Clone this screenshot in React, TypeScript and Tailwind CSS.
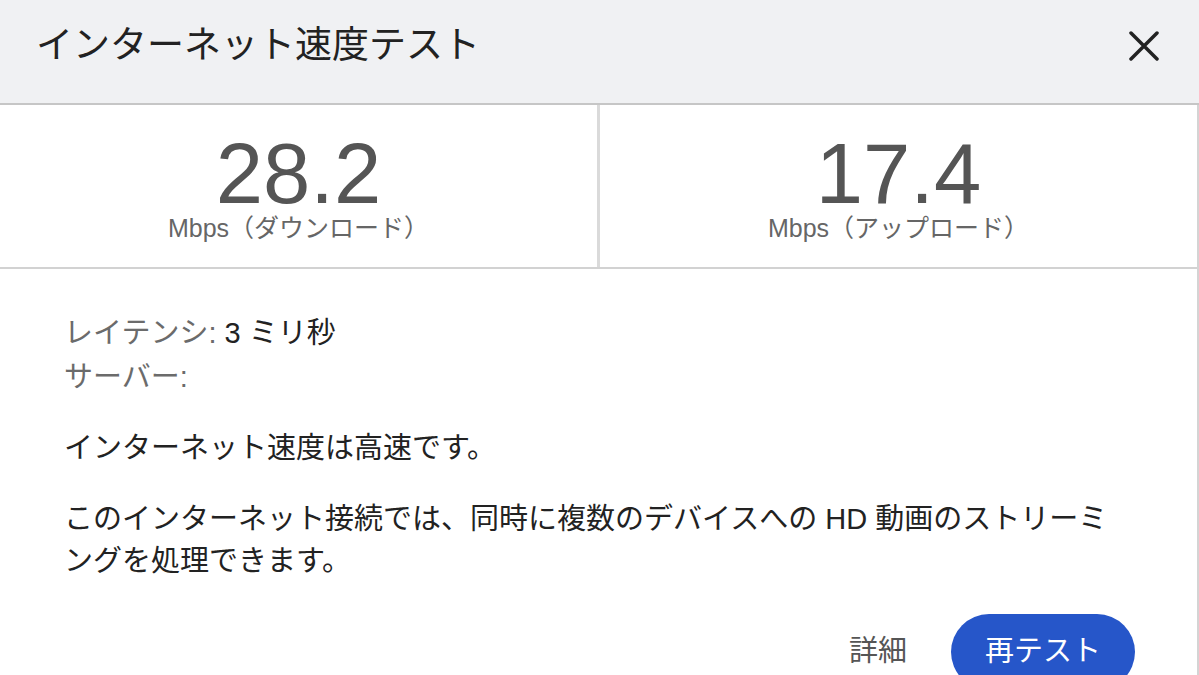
import React from 'react';

const font = { fontFamily: '"Liberation Sans", "Noto Sans CJK JP", sans-serif' };

const Stat: React.FC<{ value: string; label: string; divider?: boolean }> = ({ value, label, divider }) => {
  return (
    <div className={`flex-1 flex flex-col items-center pt-[26px] ${divider ? 'border-r-[3px] border-[#dadada]' : ''}`}>
      <div className="text-[85px] leading-none text-[#555555]">{value}</div>
      <div className="text-[25px] leading-none text-[#666666]">{label}</div>
    </div>
  );
};

const App: React.FC = () => {
  return (
    <div className="w-[1199px] h-[675px] overflow-hidden bg-white" style={font}>
      <div className="h-[105px] bg-[#f0f1f3] border-b-2 border-[#c6c6c6] flex items-center justify-between pl-9 pr-10">
        <h1 className="text-[37px] leading-none text-[#222222] mt-[-12px]">インターネット速度テスト</h1>
        <svg width="30" height="30" viewBox="0 0 30 30" className="mt-[-12px]">
          <path d="M2 2 L28 28 M28 2 L2 28" stroke="#222222" strokeWidth="3.5" strokeLinecap="round" />
        </svg>
      </div>

      <div className="border-r-2 border-[#d4d4d4]">
        <div className="flex h-[164px] border-b-2 border-[#d2d2d2]">
          <Stat value="28.2" label="Mbps（ダウンロード）" divider />
          <Stat value="17.4" label="Mbps（アップロード）" />
        </div>

        <div className="pl-16 pr-[80px] pt-[42px] text-[29px]">
          <div className="leading-[44px]">
            <div>
              <span className="text-[#6b6b6b]">レイテンシ:</span>{' '}
              <span className="text-[#222222]">3 ミリ秒</span>
            </div>
            <div className="text-[#6b6b6b]">サーバー:</div>
          </div>
          <p className="mt-[27px] leading-[44px] text-[#222222]">インターネット速度は高速です。</p>
          <p className="mt-[28px] leading-[42px] text-[#222222]">
            このインターネット接続では、同時に複数のデバイスへの HD 動画のストリーミングを処理できます。
          </p>
          <div className="flex items-center justify-end gap-[44px] mt-[32px] mr-[-18px]">
            <button className="text-[29px] text-[#555555]" style={font}>詳細</button>
            <button
              className="h-[76px] px-[34px] rounded-full bg-[#2656c9] text-white text-[29px]"
              style={font}
            >
              再テスト
            </button>
          </div>
        </div>
      </div>
    </div>
  );
};

export default App;
